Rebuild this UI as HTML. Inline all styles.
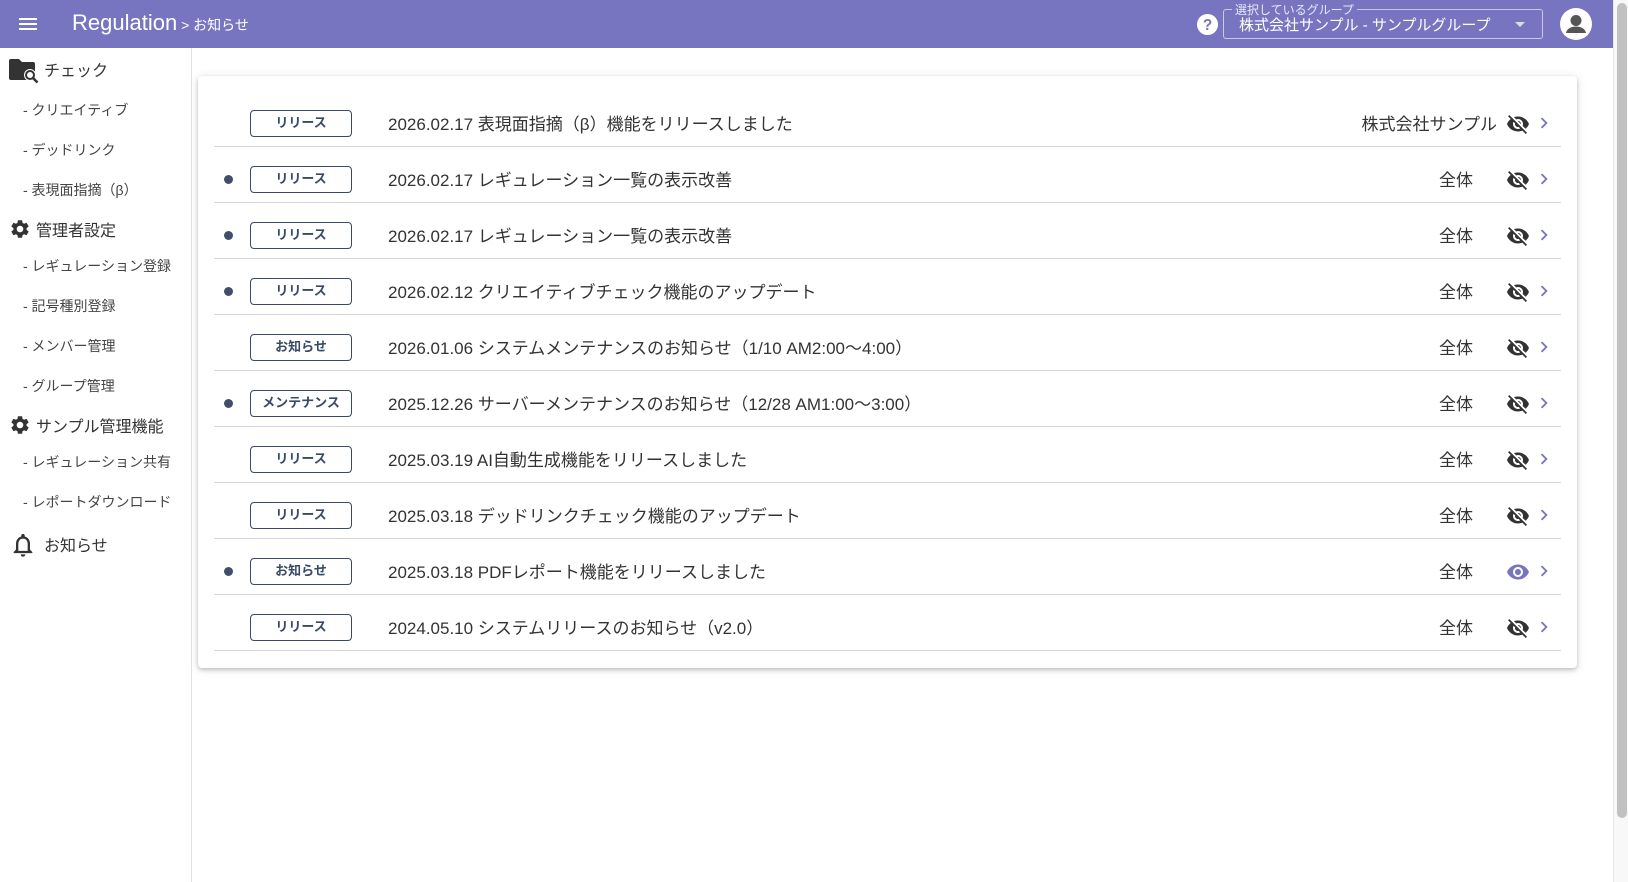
<!DOCTYPE html>
<html><head><meta charset="utf-8"><style>
*{box-sizing:border-box;margin:0;padding:0}
body{width:1628px;height:882px;overflow:hidden;background:#fff;font-family:"Liberation Sans","Noto Sans CJK JP",sans-serif;color:#333;position:relative}
.hdr{position:absolute;left:0;top:0;width:1613px;height:48px;background:#7875c0;color:#fff}
.sb{position:absolute;left:1613px;top:0;width:15px;height:882px;background:#f8f8f8;border-left:1px solid #e6e6e6}
.thumb{position:absolute;left:1617px;top:3px;width:10px;height:815px;background:#c1c1c1;border-radius:5px}
.side{position:absolute;left:0;top:48px;width:192px;height:834px;border-right:1px solid #e0e0e0}
.side .h{position:absolute;left:36px;font-size:16px;color:#333}
.side .s{position:absolute;left:23px;font-size:14px;color:#444}
.card{position:absolute;left:198px;top:76px;width:1379px;height:592px;background:#fff;border-radius:4px;box-shadow:0 2px 4px rgba(0,0,0,.2),0 1px 10px rgba(0,0,0,.1)}
.row{position:absolute;left:214px;width:1347px;height:56px;border-bottom:1px solid #d6d6d6}
.dot{position:absolute;left:10px;top:28px;width:9px;height:9px;border-radius:50%;background:#3d4f6b}
.bd{position:absolute;left:36px;top:19px;width:102px;height:27px;border:1.5px solid #3a4a66;border-radius:4px;font-size:13px;font-weight:bold;color:#3a4a66;text-align:center;line-height:24px}
.tx{position:absolute;left:174px;top:19px;font-size:17px;color:#333;white-space:nowrap}
.sc{position:absolute;right:88px;top:19px;font-size:17px;color:#333;white-space:nowrap}
.eye{position:absolute;left:1292px;top:21px}
.chev{position:absolute;left:1319px;top:21px}
</style></head><body>
<div class="hdr">
<svg style="position:absolute;left:16px;top:12px" width="24" height="24" viewBox="0 0 24 24"><path fill="#fff" d="M3 18h18v-2H3v2zm0-5h18v-2H3v2zm0-7v2h18V6H3z"/></svg>
<div style="position:absolute;left:72px;top:10px;font-size:22px">Regulation<span style="font-size:14px"> &gt; お知らせ</span></div>
<svg style="position:absolute;left:1196px;top:13px" width="23" height="23" viewBox="0 0 24 24"><circle cx="12" cy="12" r="11" fill="#fff"/><text x="12" y="18" text-anchor="middle" font-size="16" font-weight="bold" fill="#7875c0" font-family="Liberation Sans">?</text></svg>
<div style="position:absolute;left:1223px;top:9px;width:320px;height:30px;border:1px solid rgba(255,255,255,.6);border-radius:3px"></div>
<div style="position:absolute;left:1232px;top:1px;font-size:12px;background:#7875c0;padding:0 3px;color:#e8e8f8">選択しているグループ</div>
<div style="position:absolute;left:1239px;top:14px;font-size:15px">株式会社サンプル - サンプルグループ</div>
<div style="position:absolute;left:1515px;top:22px;border-left:5px solid transparent;border-right:5px solid transparent;border-top:5px solid #ddd"></div>
<svg style="position:absolute;left:1560px;top:8px" width="32" height="32" viewBox="0 0 32 32"><circle cx="16" cy="16" r="16" fill="#fff"/><circle cx="16" cy="12.5" r="5.5" fill="#555"/><path d="M6 25c1-5 6-6.5 10-6.5s9 1.5 10 6.5z" fill="#555"/></svg>
</div>
<div class="sb"></div><div class="thumb"></div>
<div class="side">
<svg style="position:absolute;left:9px;top:10px" width="30" height="26" viewBox="0 0 30 26"><path d="M0 3a2 2 0 0 1 2-2h8l3 3h11a2 2 0 0 1 2 2v14a2 2 0 0 1-2 2H2a2 2 0 0 1-2-2z" fill="#333"/><circle cx="21" cy="17" r="6" fill="#fff"/><circle cx="21" cy="17" r="4" fill="none" stroke="#333" stroke-width="2"/><path d="M24 20l4.5 4.5" stroke="#333" stroke-width="2.6"/></svg>
<div class="h" style="left:44px;top:9px">チェック</div>
<div class="s" style="top:52px">- クリエイティブ</div>
<div class="s" style="top:92px">- デッドリンク</div>
<div class="s" style="top:132px">- 表現面指摘（β）</div>
<svg style="position:absolute;left:9px;top:170px" width="22" height="22" viewBox="0 0 24 24"><path fill="#333" d="M19.14 12.94c.04-.3.06-.61.06-.94 0-.32-.02-.64-.07-.94l2.03-1.58a.49.49 0 0 0 .12-.61l-1.92-3.32a.488.488 0 0 0-.59-.22l-2.39.96c-.5-.38-1.03-.7-1.620-.94l-.36-2.54a.484.484 0 0 0-.48-.41h-3.84c-.24 0-.43.17-.47.41l-.36 2.54c-.59.24-1.13.57-1.62.94l-2.39-.96c-.22-.08-.47 0-.59.22L2.74 8.87c-.12.21-.08.47.12.61l2.03 1.58c-.05.3-.09.63-.09.94s.02.64.07.94l-2.03 1.58a.49.49 0 0 0-.12.61l1.92 3.32c.12.22.37.29.59.22l2.39-.96c.5.38 1.03.7 1.62.94l.36 2.54c.05.24.24.41.48.41h3.84c.24 0 .44-.17.47-.41l.36-2.54c.59-.24 1.13-.56 1.62-.94l2.39.96c.22.08.47 0 .59-.22l1.92-3.32c.12-.22.07-.47-.12-.61l-2.01-1.58zM12 15.6c-1.98 0-3.6-1.62-3.6-3.6s1.62-3.6 3.6-3.6 3.6 1.62 3.6 3.6-1.62 3.6-3.6 3.6z"/></svg>
<div class="h" style="top:169px">管理者設定</div>
<div class="s" style="top:208px">- レギュレーション登録</div>
<div class="s" style="top:248px">- 記号種別登録</div>
<div class="s" style="top:288px">- メンバー管理</div>
<div class="s" style="top:328px">- グループ管理</div>
<svg style="position:absolute;left:9px;top:366px" width="22" height="22" viewBox="0 0 24 24"><path fill="#333" d="M19.14 12.94c.04-.3.06-.61.06-.94 0-.32-.02-.64-.07-.94l2.03-1.58a.49.49 0 0 0 .12-.61l-1.92-3.32a.488.488 0 0 0-.59-.22l-2.39.96c-.5-.38-1.03-.7-1.62-.94l-.36-2.54a.484.484 0 0 0-.48-.41h-3.84c-.24 0-.43.17-.47.41l-.36 2.54c-.59.24-1.13.57-1.62.94l-2.39-.96c-.22-.08-.47 0-.59.22L2.74 8.87c-.12.21-.08.47.12.61l2.03 1.58c-.05.3-.09.63-.09.94s.02.64.07.94l-2.03 1.58a.49.49 0 0 0-.12.61l1.92 3.32c.12.22.37.29.59.22l2.39-.96c.5.38 1.03.7 1.62.94l.36 2.54c.05.24.24.41.48.41h3.84c.24 0 .44-.17.47-.41l.36-2.54c.59-.24 1.13-.56 1.62-.94l2.39.96c.22.08.47 0 .59-.22l1.92-3.32c.12-.22.07-.47-.12-.61l-2.01-1.58zM12 15.6c-1.98 0-3.6-1.62-3.6-3.6s1.62-3.6 3.6-3.6 3.6 1.62 3.6 3.6-1.62 3.6-3.6 3.6z"/></svg>
<div class="h" style="top:365px">サンプル管理機能</div>
<div class="s" style="top:404px">- レギュレーション共有</div>
<div class="s" style="top:444px">- レポートダウンロード</div>
<svg style="position:absolute;left:9px;top:483px" width="28" height="28" viewBox="0 0 24 24"><path fill="#333" d="M12 22c1.1 0 2-.9 2-2h-4c0 1.1.89 2 2 2zm6-6v-5c0-3.07-1.64-5.64-4.5-6.32V4c0-.83-.67-1.5-1.5-1.5s-1.5.67-1.5 1.5v.68C7.63 5.36 6 7.92 6 11v5l-2 2v1h16v-1l-2-2zm-2 1H8v-6c0-2.48 1.51-4.5 4-4.5s4 2.02 4 4.5v6z"/></svg>
<div class="h" style="left:44px;top:484px">お知らせ</div>
</div>
<div class="card"></div>
<svg width="0" height="0" style="position:absolute"><defs>
<symbol id="off" viewBox="0 0 24 24"><path fill="#333" d="M12 7c2.76 0 5 2.24 5 5 0 .65-.13 1.26-.36 1.83l2.92 2.92c1.51-1.26 2.7-2.89 3.43-4.75-1.73-4.39-6-7.5-11-7.5-1.4 0-2.74.25-3.98.7l2.16 2.16C10.74 7.13 11.35 7 12 7zM2 4.27l2.28 2.28.46.46C3.08 8.3 1.78 10.02 1 12c1.73 4.39 6 7.5 11 7.5 1.55 0 3.03-.3 4.38-.84l.42.42L19.73 22 21 20.73 3.27 3 2 4.27zM7.53 9.8l1.55 1.55c-.05.21-.08.43-.08.65 0 1.66 1.34 3 3 3 .22 0 .44-.03.65-.08l1.55 1.55c-.67.33-1.41.53-2.2.53-2.76 0-5-2.24-5-5 0-.79.2-1.53.53-2.2zm4.31-.78l3.15 3.15.02-.16c0-1.66-1.34-3-3-3l-.17.01z"/></symbol>
<symbol id="on" viewBox="0 0 24 24"><path fill="#7875c0" d="M12 4.5C7 4.5 2.73 7.61 1 12c1.73 4.39 6 7.5 11 7.5s9.27-3.11 11-7.5c-1.73-4.39-6-7.5-11-7.5zM12 17c-2.76 0-5-2.24-5-5s2.24-5 5-5 5 2.24 5 5-2.24 5-5 5zm0-8c-1.66 0-3 1.34-3 3s1.34 3 3 3 3-1.34 3-3-1.34-3-3-3z"/></symbol>
<symbol id="ch" viewBox="0 0 24 24"><path fill="#7875c0" d="M8.59 16.59 13.17 12 8.59 7.41 10 6l6 6-6 6z"/></symbol>
</defs></svg>
<div class="row" style="top:91px"><div class="bd">リリース</div><div class="tx">2026.02.17 表現面指摘（β）機能をリリースしました</div><div class="sc" style="right:64px">株式会社サンプル</div><svg class="eye" width="24" height="24"><use href="#off"/></svg><svg class="chev" width="22" height="22"><use href="#ch"/></svg></div>
<div class="row" style="top:147px"><div class="dot"></div><div class="bd">リリース</div><div class="tx">2026.02.17 レギュレーション一覧の表示改善</div><div class="sc">全体</div><svg class="eye" width="24" height="24"><use href="#off"/></svg><svg class="chev" width="22" height="22"><use href="#ch"/></svg></div>
<div class="row" style="top:203px"><div class="dot"></div><div class="bd">リリース</div><div class="tx">2026.02.17 レギュレーション一覧の表示改善</div><div class="sc">全体</div><svg class="eye" width="24" height="24"><use href="#off"/></svg><svg class="chev" width="22" height="22"><use href="#ch"/></svg></div>
<div class="row" style="top:259px"><div class="dot"></div><div class="bd">リリース</div><div class="tx">2026.02.12 クリエイティブチェック機能のアップデート</div><div class="sc">全体</div><svg class="eye" width="24" height="24"><use href="#off"/></svg><svg class="chev" width="22" height="22"><use href="#ch"/></svg></div>
<div class="row" style="top:315px"><div class="bd">お知らせ</div><div class="tx">2026.01.06 システムメンテナンスのお知らせ（1/10 AM2:00〜4:00）</div><div class="sc">全体</div><svg class="eye" width="24" height="24"><use href="#off"/></svg><svg class="chev" width="22" height="22"><use href="#ch"/></svg></div>
<div class="row" style="top:371px"><div class="dot"></div><div class="bd">メンテナンス</div><div class="tx">2025.12.26 サーバーメンテナンスのお知らせ（12/28 AM1:00〜3:00）</div><div class="sc">全体</div><svg class="eye" width="24" height="24"><use href="#off"/></svg><svg class="chev" width="22" height="22"><use href="#ch"/></svg></div>
<div class="row" style="top:427px"><div class="bd">リリース</div><div class="tx">2025.03.19 AI自動生成機能をリリースしました</div><div class="sc">全体</div><svg class="eye" width="24" height="24"><use href="#off"/></svg><svg class="chev" width="22" height="22"><use href="#ch"/></svg></div>
<div class="row" style="top:483px"><div class="bd">リリース</div><div class="tx">2025.03.18 デッドリンクチェック機能のアップデート</div><div class="sc">全体</div><svg class="eye" width="24" height="24"><use href="#off"/></svg><svg class="chev" width="22" height="22"><use href="#ch"/></svg></div>
<div class="row" style="top:539px"><div class="dot"></div><div class="bd">お知らせ</div><div class="tx">2025.03.18 PDFレポート機能をリリースしました</div><div class="sc">全体</div><svg class="eye" width="24" height="24"><use href="#on"/></svg><svg class="chev" width="22" height="22"><use href="#ch"/></svg></div>
<div class="row" style="top:595px"><div class="bd">リリース</div><div class="tx">2024.05.10 システムリリースのお知らせ（v2.0）</div><div class="sc">全体</div><svg class="eye" width="24" height="24"><use href="#off"/></svg><svg class="chev" width="22" height="22"><use href="#ch"/></svg></div>
</body></html>
